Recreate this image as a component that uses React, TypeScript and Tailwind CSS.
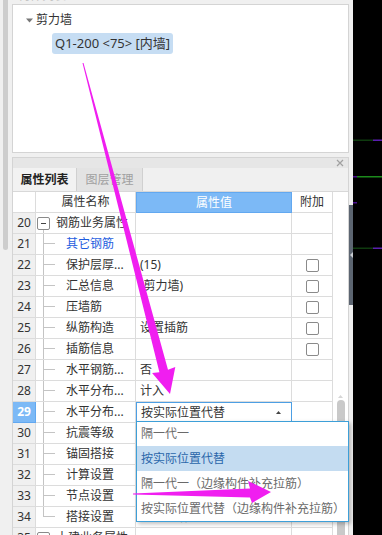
import React from "react";

type Row = {
  n: number;
  name: string;
  value?: string;
  check?: boolean;
  group?: boolean;
  blue?: boolean;
  last?: boolean;
  select?: boolean;
  open?: boolean;
};

const rows: Row[] = [
  { n: 20, name: "钢筋业务属性", group: true, open: true },
  { n: 21, name: "其它钢筋", blue: true },
  { n: 22, name: "保护层厚...", value: "(15)", check: true },
  { n: 23, name: "汇总信息", value: "(剪力墙)", check: true },
  { n: 24, name: "压墙筋", check: true },
  { n: 25, name: "纵筋构造", value: "设置插筋", check: true },
  { n: 26, name: "插筋信息", check: true },
  { n: 27, name: "水平钢筋...", value: "否" },
  { n: 28, name: "水平分布...", value: "计入" },
  { n: 29, name: "水平分布...", value: "按实际位置代替", select: true },
  { n: 30, name: "抗震等级", value: "(四级抗震)" },
  { n: 31, name: "锚固搭接", value: "按默认锚固搭接计算" },
  { n: 32, name: "计算设置", value: "按默认计算设置计算" },
  { n: 33, name: "节点设置", value: "按默认节点设置计算" },
  { n: 34, name: "搭接设置", value: "按默认搭接设置计算", last: true },
  { n: 35, name: "土建业务属性", group: true },
];

function MinusBox() {
  return (
    <div className="w-[13px] h-[13px] border border-[#8a8a8a] rounded-[2px] bg-white flex items-center justify-center shrink-0">
      <div className="w-[5px] h-px bg-[#444]" />
    </div>
  );
}

function NameCell({ r }: { r: Row }) {
  if (r.group) {
    return (
      <div className="h-full flex items-center">
        <div className="ml-px h-full flex flex-col">
          <div className="flex-1" />
          <MinusBox />
          <div className="flex-1 flex">
            {r.open && <div className="ml-[6px] w-px h-full bg-[#c4c4c4]" />}
          </div>
        </div>
        <span className="ml-[6px] whitespace-nowrap text-[#333]">{r.name}</span>
      </div>
    );
  }
  return (
    <div className="h-full flex items-stretch">
      <div className="w-[7px] shrink-0" />
      <div className="w-[12px] shrink-0 flex flex-col">
        <div className="h-[10px] border-l border-b border-[#c4c4c4]" />
        <div className={"flex-1 " + (r.last ? "" : "border-l border-[#c4c4c4]")} />
      </div>
      <span
        className={
          "ml-[11px] self-center whitespace-nowrap " +
          (r.blue ? "text-[#1f5ee0]" : "text-[#333]")
        }
      >
        {r.name}
      </span>
    </div>
  );
}

export default function App() {
  return (
    <div className="relative w-[382px] h-[535px] overflow-hidden flex font-['Noto_Sans','Noto_Sans_CJK_SC',sans-serif] text-[12px] leading-none">
      {/* left application area */}
      <div className="w-[353px] h-full bg-[#f0f0f0] flex">
        {/* outer scroll strip */}
        <div className="w-[12px] shrink-0 pl-[3px]">
          <div className="w-[5px] h-[250px] bg-[#cdcdcd] rounded-b-[3px]" />
        </div>

        {/* main column */}
        <div className="w-[337px] shrink-0 flex flex-col">
          <div className="h-[4px] overflow-hidden">
            <div className="mt-[-10px] ml-[6px] text-[#c4c4c4]">构件列表</div>
          </div>

          {/* top panel */}
          <div className="h-[149px] border border-[#d4d4d4] bg-white">
            <div className="mt-[5px] h-[20px] pl-[13px] flex items-center">
              <svg width="7" height="5" viewBox="0 0 7 5" className="shrink-0">
                <path d="M0 0.5 L7 0.5 L3.5 4.5 Z" fill="#777" />
              </svg>
              <span className="ml-[3px] text-[#333]">剪力墙</span>
            </div>
            <div className="mt-[3px] ml-[39px] w-fit h-[21px] px-[3px] rounded-[3px] bg-[#c6ddf3] flex items-center text-[#333] text-[13px] whitespace-nowrap">
              Q1-200 &lt;75&gt; [内墙]
            </div>
          </div>

          <div className="h-[4px]" />

          {/* property panel */}
          <div className="flex-1 border-x border-t border-[#d4d4d4] flex flex-col overflow-hidden">
            <div className="h-[10px] bg-[#e6e6e6] flex items-center justify-end pr-[4px]">
              <svg width="8" height="8" viewBox="0 0 8 8">
                <path d="M1 1 L7 7 M7 1 L1 7" stroke="#a0a0a0" strokeWidth="1.2" />
              </svg>
            </div>
            <div className="h-[24px] bg-[#f0f0f0] flex border-b border-[#d8d8d8]">
              <div className="w-[64px] bg-[#f2f2f2] border-r border-[#d0d0d0] flex items-center justify-center text-[#222] font-semibold">
                属性列表
              </div>
              <div className="w-[66px] bg-[#e3e3e3] border-r border-[#d0d0d0] flex items-center justify-center text-[#a0a0a0]">
                图层管理
              </div>
            </div>

            <div className="flex-1 flex bg-white overflow-hidden">
              <div className="w-[320px] shrink-0 flex flex-col">
                {/* header */}
                <div className="grid grid-cols-[23px_100px_156px_41px] h-[21px] shrink-0">
                  <div className="border-r border-b border-[#dcdcdc] bg-white" />
                  <div className="border-r border-b border-[#dcdcdc] flex items-center justify-center text-[#333]">
                    属性名称
                  </div>
                  <div className="border border-[#62a8f0] bg-[#7cb9f6] flex items-center justify-center text-white">
                    属性值
                  </div>
                  <div className="border-r border-b border-[#dcdcdc] flex items-center justify-center text-[#333]">
                    附加
                  </div>
                </div>
                {rows.map((r) => (
                  <div
                    key={r.n}
                    className="grid grid-cols-[23px_100px_156px_41px] h-[21px] shrink-0"
                  >
                    <div
                      className={
                        "border-r border-b flex items-center justify-center " +
                        (r.select
                          ? "bg-[#7cb9f6] border-[#62a8f0] text-white font-bold"
                          : "bg-[#f0f0f0] border-[#dcdcdc] text-[#333]")
                      }
                    >
                      {r.n}
                    </div>
                    <div className="border-r border-b border-[#dcdcdc] overflow-hidden">
                      <NameCell r={r} />
                    </div>
                    {r.select ? (
                      <div className="border border-[#4d9fe4] bg-white flex items-center justify-between pl-[4px] pr-[10px] text-[#333] whitespace-nowrap">
                        <span>{r.value}</span>
                        <svg width="5" height="3" viewBox="0 0 5 3">
                          <path d="M0 3 L2.5 0 L5 3 Z" fill="#444" />
                        </svg>
                      </div>
                    ) : (
                      <div className="border-r border-b border-[#dcdcdc] flex items-center pl-[4px] text-[#333] whitespace-nowrap overflow-hidden">
                        {r.value}
                      </div>
                    )}
                    <div className="border-r border-b border-[#dcdcdc] flex items-center justify-center">
                      {r.check && (
                        <div className="w-[13px] h-[13px] border border-[#8a8a8a] rounded-[2px] bg-white" />
                      )}
                    </div>
                  </div>
                ))}
              </div>
              {/* table scrollbar */}
              <div className="flex-1 flex flex-col items-center">
                <div className="h-[203px]" />
                <svg width="5" height="3" viewBox="0 0 5 3">
                  <path d="M0 3 L2.5 0 L5 3 Z" fill="#d6d6d6" />
                </svg>
                <div className="mt-[2px] w-[8px] flex-1 bg-[#c9c9c9] rounded-t-[4px]" />
              </div>
            </div>
          </div>
        </div>

        {/* thin dark scroll column */}
        <div className="w-[4px] shrink-0 flex flex-col">
          <div className="h-[205px]" />
          <div className="h-[100px] bg-[#5c6571] flex items-center justify-center">
            <svg width="3" height="6" viewBox="0 0 3 6">
              <path d="M3 0 L0 3 L3 6 Z" fill="#c8ccd2" />
            </svg>
          </div>
        </div>
      </div>

      {/* black canvas */}
      <div className="w-[29px] h-full bg-black">
        <svg width="29" height="535" viewBox="0 0 29 535">
          <rect x="0" y="139.5" width="20" height="1.5" fill="#0e3a0e" />
          <rect x="20" y="139.5" width="9" height="1.5" fill="#5a1eb0" />
          <rect x="0" y="176" width="4" height="1.5" fill="#4a1090" />
          <rect x="4" y="176" width="25" height="1.5" fill="#1c8a1c" />
          <rect x="0" y="202" width="4" height="1.5" fill="#4a1090" />
          <rect x="0" y="247.5" width="20" height="1.5" fill="#0f3a0f" />
          <rect x="20" y="247.5" width="9" height="1.5" fill="#5a20b0" />
        </svg>
      </div>

      {/* dropdown list */}
      <div className="absolute left-[136px] top-[421px] w-[213px] border border-[#3d9fd8] bg-white shadow-[2px_2px_4px_rgba(0,0,0,0.25)] flex flex-col">
        <div className="h-[24px] flex items-center pl-[4px] text-[#6a6a6a]">隔一代一</div>
        <div className="h-[25px] flex items-center pl-[4px] bg-[#c4dcf1] text-[#2a66aa]">按实际位置代替</div>
        <div className="h-[25px] flex items-center pl-[4px] text-[#6a6a6a] whitespace-nowrap">隔一代一（边缘构件补充拉筋）</div>
        <div className="h-[25px] flex items-center pl-[4px] text-[#6a6a6a] whitespace-nowrap">按实际位置代替（边缘构件补充拉筋）</div>
      </div>

      {/* annotation arrows */}
      <svg
        className="absolute left-0 top-0 pointer-events-none"
        width="382"
        height="535"
        viewBox="0 0 382 535"
      >
        <polygon
          points="82.5,63.1 83.5,62.9 168,369.8 175.3,366.9 170,394 152.1,373 159.4,372.2"
          fill="#f01ef0"
        />
        <polygon
          points="133,493.6 133,494.4 250,497.5 252,503 271,492 248,481 250,488.5"
          fill="#f01ef0"
        />
      </svg>
    </div>
  );
}
